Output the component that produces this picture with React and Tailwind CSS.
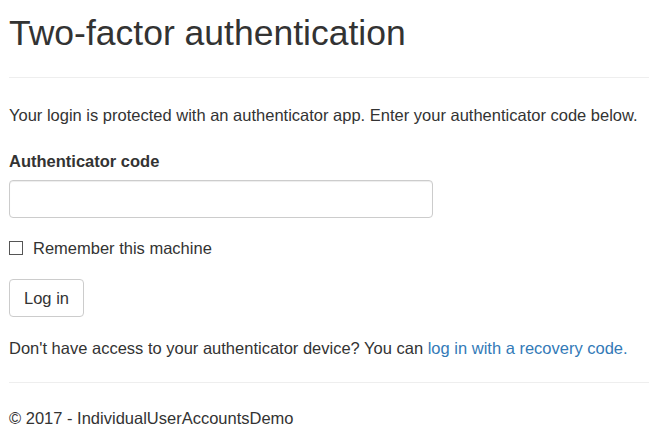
import React from 'react'

const App = () => {
  return (
    <div className="min-h-[436px] bg-white pl-[9px] pr-[1px] text-[16.5px] leading-[22px] text-[#333]" style={{ fontFamily: '"Liberation Sans", Arial, sans-serif' }}>
      <h1 className="pt-[14px] text-[35.5px] leading-[39px] text-[#333]">Two-factor authentication</h1>
      <hr className="mt-[24px] border-t border-[#eee]" />

      <p className="mt-[26px]">Your login is protected with an authenticator app. Enter your authenticator code below.</p>

      <form className="mt-[24px]">
        <label className="block font-bold">Authenticator code</label>
        <input
          type="text"
          className="mt-[8px] block h-[38px] w-[424px] rounded border border-[#ccc] px-3 shadow-[inset_0_1px_1px_rgba(0,0,0,0.075)]"
        />

        <label className="mt-[19px] flex h-[22px] items-center gap-[10px]">
          <span className="block h-[14px] w-[14px] border border-[#555] bg-white" />
          <span>Remember this machine</span>
        </label>

        <button
          type="button"
          className="mt-[20px] block h-[38px] w-[75px] rounded border border-[#ccc] bg-white text-[16.5px] text-[#333]"
        >
          Log in
        </button>
      </form>

      <p className="mt-[20px]">
        Don't have access to your authenticator device? You can{' '}
        <a href="#" className="text-[#337ab7]">log in with a recovery code.</a>
      </p>

      <hr className="mt-[23px] border-t border-[#eee]" />
      <footer className="mt-[24px]">
        <p>© 2017 - IndividualUserAccountsDemo</p>
      </footer>
    </div>
  )
}

export default App
